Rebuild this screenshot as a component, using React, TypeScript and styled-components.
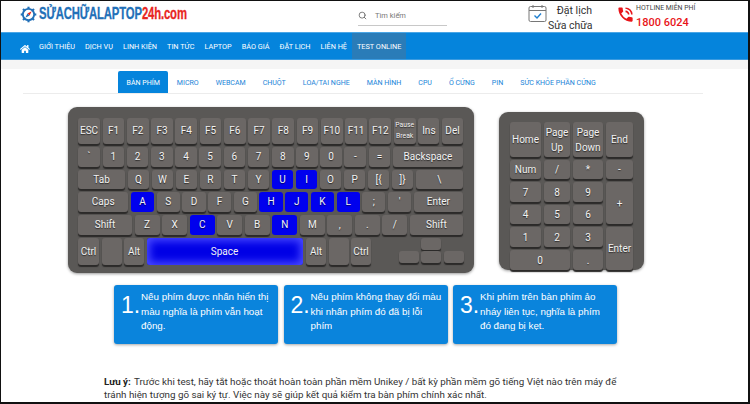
import React from "react";
import styled, { createGlobalStyle } from "styled-components";
import { FaHome } from "react-icons/fa";
import { MdPhoneInTalk } from "react-icons/md";
import { Search } from "lucide-react";

const GlobalStyle = createGlobalStyle`
  html, body {
    margin: 0;
    padding: 0;
    background: #fff;
    font-family: Roboto, "Noto Sans", sans-serif;
  }
`;

const Frame = styled.div`
  width: 750px;
  height: 404px;
  box-sizing: border-box;
  border: 1px solid #111;
  border-right-width: 2px;
  border-bottom-width: 2px;
  overflow: hidden;
  background: #fff;
`;

const Header = styled.header`
  display: flex;
  align-items: center;
  height: 31px;
  padding-left: 19px;
`;

const Logo = styled.div`
  display: flex;
  align-items: center;
  width: 338px;
  margin-top: -5px;
`;

const LogoText = styled.div`
  margin-left: 2px;
  font-family: "Liberation Sans", Arial, sans-serif;
  font-weight: 700;
  font-size: 17px;
  color: #2270b8;
  letter-spacing: -0.2px;
  transform: scaleX(0.665);
  transform-origin: left center;
  white-space: nowrap;
  -webkit-text-stroke: 0.3px currentColor;

  span {
    color: #e8261f;
  }
`;

const SearchBox = styled.div`
  display: flex;
  align-items: center;
  gap: 8px;
  width: 89px;
  height: 19px;
  margin-top: -1px;
  border-bottom: 1px solid #c8c8c8;
  font-size: 7.5px;
  color: #777;
  svg {
    color: #555;
  }
`;

const Booking = styled.div`
  display: flex;
  align-items: flex-start;
  align-self: flex-start;
  margin-left: 81px;
  padding-top: 3px;
  width: 88px;
`;

const BookingText = styled.div`
  width: 44px;
  margin-top: -1px;
  text-align: right;
  font-size: 10.5px;
  line-height: 15px;
  color: #333;
  white-space: nowrap;
`;

const Hotline = styled.div`
  display: flex;
  align-items: flex-start;
  align-self: flex-start;
  gap: 1px;
  padding-top: 2px;

  svg {
    margin-top: 2px;
  }
`;

const HotlineLabel = styled.div`
  font-size: 6.9px;
  line-height: 10px;
  color: #444;
  white-space: nowrap;
`;

const HotlineNumber = styled.div`
  margin-top: 2px;
  font-size: 11px;
  line-height: 16px;
  font-weight: 500;
  color: #e8141a;
  white-space: nowrap;
`;

const Nav = styled.nav`
  display: flex;
  align-items: stretch;
  height: 28px;
  box-sizing: border-box;
  padding-left: 19px;
  background: #0584dc;
  border-top: 1px solid #4aa6e6;
  border-bottom: 1px solid #3b9be0;
`;

const NavHome = styled.div`
  display: flex;
  align-items: center;
  width: 14px;
  padding-top: 5px;
  color: #fff;
`;

const NavLink = styled.a<{ $active?: boolean }>`
  display: flex;
  align-items: center;
  padding: 0 5px;
  font-size: 7.3px;
  color: #fff;
  white-space: nowrap;
  background: ${(p) => (p.$active ? "#2a7cb8" : "transparent")};
`;

const Strip = styled.div`
  height: 9px;
  background: #f5f5f5;
`;

const Tabs = styled.div`
  display: flex;
  align-items: stretch;
  height: 22px;
  margin: 2px 45px 0 22px;
  padding-left: 95px;
  border-bottom: 1px solid #ececec;
`;

const Tab = styled.a<{ $active?: boolean }>`
  display: flex;
  align-items: center;
  padding: 0 8.5px;
  font-size: 7.05px;
  white-space: nowrap;
  color: ${(p) => (p.$active ? "#fff" : "#1a84d8")};
  background: ${(p) => (p.$active ? "#0584dc" : "transparent")};
  border-radius: 2px 2px 0 0;
`;

const Boards = styled.div`
  display: flex;
  align-items: flex-start;
  padding: 13px 0 0 67px;
`;

const Board = styled.div`
  display: flex;
  flex-direction: column;
  gap: 3px;
  width: 406px;
  height: 166px;
  box-sizing: border-box;
  padding: 11px 11px 0 10px;
  background: #5a5856;
  border-radius: 9px;
  box-shadow: 0 1px 3px rgba(0, 0, 0, 0.4);
`;

const Row = styled.div<{ $h: number }>`
  display: flex;
  gap: 2.5px;
  height: ${(p) => p.$h}px;
`;

const Key = styled.div<{ $w?: number; $fixed?: number; $on?: boolean; $small?: boolean }>`
  flex: ${(p) => (p.$fixed ? `none` : `${p.$w ?? 22} 1 0`)};
  width: ${(p) => (p.$fixed ? `${p.$fixed}px` : "auto")};
  min-width: 0;
  display: flex;
  align-items: center;
  justify-content: center;
  text-align: center;
  font-size: ${(p) => (p.$small ? "6.8px" : "10px")};
  line-height: ${(p) => (p.$small ? "11px" : "14px")};
  color: #f2f2f2;
  text-shadow: 0 1px 1px rgba(0, 0, 0, 0.6);
  white-space: nowrap;
  background: ${(p) => (p.$on ? "#0000ee" : "#6b6765")};
  border-radius: 3px;
  box-shadow: ${(p) => (p.$on ? "none" : "0 2px 1px #2b2a29")};
`;

const SpaceKey = styled(Key)`
  margin-right: 1px;
  background: #0000e6;
  box-shadow: inset 0 0 9px 3px #4a4aff;
  text-shadow: none;
`;

const Arrows = styled.div`
  display: grid;
  grid-template-columns: repeat(3, 20px);
  grid-template-rows: 12px 12px;
  gap: 1px 2.5px;
  margin-left: 25px;
  flex: none;
  align-self: flex-start;
`;

const ArrowKey = styled.div<{ $col: number; $row: number }>`
  grid-column: ${(p) => p.$col};
  grid-row: ${(p) => p.$row};
  background: #6b6765;
  border-radius: 3px;
  box-shadow: 0 2px 1px #2b2a29;
`;

const Numpad = styled.div`
  display: grid;
  grid-template-columns: 31px 26px 30px 27px;
  grid-template-rows: 35px 19px 20px 19px 20px 20px;
  gap: 3px;
  width: 145px;
  height: 158px;
  margin: 5px 0 0 25px;
  box-sizing: border-box;
  padding: 10px 0 0 11px;
  background: #5a5856;
  border-radius: 9px;
  box-shadow: 0 1px 3px rgba(0, 0, 0, 0.4);
`;

const PadKey = styled.div<{ $span?: string; $row?: string }>`
  grid-column: ${(p) => p.$span ?? "auto"};
  grid-row: ${(p) => p.$row ?? "auto"};
  display: flex;
  align-items: center;
  justify-content: center;
  text-align: center;
  font-size: 10px;
  line-height: 15px;
  color: #f2f2f2;
  text-shadow: 0 1px 1px rgba(0, 0, 0, 0.6);
  background: #6b6765;
  border-radius: 3px;
  box-shadow: 0 2px 1px #2b2a29;
`;

const Cards = styled.div`
  display: flex;
  gap: 5.5px;
  margin: 12px 0 0 113px;
`;

const Card = styled.div`
  display: flex;
  width: 164px;
  height: 59px;
  box-sizing: border-box;
  padding: 5px 0 0 7px;
  background: #0a84dc;
  border-radius: 3px;
  box-shadow: 0 1px 3px rgba(0, 0, 0, 0.35);
  color: #fff;
  font-family: "Liberation Sans", Arial, sans-serif;
`;

const CardNumber = styled.div`
  flex: none;
  width: 20px;
  margin-top: 1px;
  font-size: 23px;
  line-height: 28px;
`;

const CardText = styled.div`
  width: 132px;
  font-size: 9.8px;
  line-height: 14.7px;
`;

const Note = styled.p`
  margin: 31px 0 0 103px;
  width: 520px;
  font-size: 9.8px;
  line-height: 13px;
  color: #333;

  b {
    margin-right: 1px;
    font-weight: 700;
    color: #222;
  }
`;

const navItems = ["GIỚI THIỆU", "DỊCH VỤ", "LINH KIỆN", "TIN TỨC", "LAPTOP", "BÁO GIÁ", "ĐẶT LỊCH", "LIÊN HỆ"];
const tabItems = ["MICRO", "WEBCAM", "CHUỘT", "LOA/TAI NGHE", "MÀN HÌNH", "CPU", "Ổ CỨNG", "PIN", "SỨC KHỎE PHẦN CỨNG"];

type K = [string, number?, boolean?];

const keyRows: { h: number; keys: K[] }[] = [
  {
    h: 26,
    keys: [["ESC"], ...["F1", "F2", "F3", "F4", "F5", "F6", "F7", "F8", "F9", "F10", "F11", "F12"].map((l): K => [l, 21.6]), ["Pause|Break", 22], ["Ins", 21], ["Del", 21]],
  },
  {
    h: 20,
    keys: [["`", 22], ...["1", "2", "3", "4", "5", "6", "7", "8", "9", "0", "-", "="].map((l): K => [l, 21.6]), ["Backspace", 70]],
  },
  {
    h: 19,
    keys: [["Tab", 46], ["Q", 21], ["W", 21], ["E", 21], ["R", 21], ["T", 21], ["Y", 21], ["U", 21, true], ["I", 21, true], ["O", 21], ["P", 21], ["[{", 21], ["]}", 21], ["\\", 46]],
  },
  {
    h: 20,
    keys: [["Caps", 50], ["A", 23, true], ["S", 23], ["D", 23], ["F", 23], ["G", 23], ["H", 23, true], ["J", 23, true], ["K", 23, true], ["L", 23, true], [";", 23], ["'", 23], ["Enter", 49]],
  },
  {
    h: 20,
    keys: [["Shift", 54], ["Z", 25], ["X", 25], ["C", 25, true], ["V", 25], ["B", 25], ["N", 25, true], ["M", 25], [",", 25], [".", 25], ["/", 25], ["Shift", 53]],
  },
];

const padKeys: { label: React.ReactNode; span?: string; row?: string }[] = [
  { label: "Home" },
  { label: <>Page<br />Up</> },
  { label: <>Page<br />Down</> },
  { label: "End" },
  { label: "Num" },
  { label: "/" },
  { label: "*" },
  { label: "-" },
  { label: "7" },
  { label: "8" },
  { label: "9" },
  { label: "+", row: "3 / span 2", span: "4" },
  { label: "4" },
  { label: "5" },
  { label: "6" },
  { label: "1" },
  { label: "2" },
  { label: "3" },
  { label: "Enter", row: "5 / span 2", span: "4" },
  { label: "0", span: "1 / span 2" },
  { label: "." },
];

const LogoGear = () => (
  <svg width="17" height="17" viewBox="0 0 24 24">
    <g stroke="#2270b8" strokeWidth="3" strokeLinecap="butt">
      {[0, 45, 90, 135, 180, 225, 270, 315].map((a) => (
        <line key={a} x1="12" y1="1" x2="12" y2="5" transform={`rotate(${a} 12 12)`} />
      ))}
    </g>
    <circle cx="12" cy="12" r="8" fill="#fff" stroke="#2270b8" strokeWidth="2.6" />
    <path d="M16.5 7.5 L13.5 13.5 L10.5 10.5 Z" fill="#e8261f" />
    <path d="M7.5 16.5 L10.5 10.5 L13.5 13.5 Z" fill="#2270b8" />
  </svg>
);

const CalendarIcon = () => (
  <svg width="20" height="19" viewBox="0 0 20 19" fill="none">
    <rect x="1" y="2.5" width="17" height="15" rx="1.5" stroke="#777" strokeWidth="1" />
    <path d="M1 6.5H18" stroke="#777" strokeWidth="1" />
    <path d="M5 1V4M14 1V4" stroke="#777" strokeWidth="1" />
    <path d="M6.5 11.5L9 14L13 9.5" stroke="#1f7fd0" strokeWidth="1.4" />
  </svg>
);

const App = () => (
  <Frame>
    <GlobalStyle />
    <Header>
      <Logo>
        <LogoGear />
        <LogoText>
          SỬACHỮALAPTOP<span>24h.com</span>
        </LogoText>
      </Logo>
      <SearchBox>
        <Search size={9} />
        Tìm kiếm
      </SearchBox>
      <Booking>
        <CalendarIcon />
        <BookingText>
          Đặt lịch
          <br />
          Sửa chữa
        </BookingText>
      </Booking>
      <Hotline>
        <MdPhoneInTalk size={19} color="#e8141a" />
        <div>
          <HotlineLabel>HOTLINE MIỄN PHÍ</HotlineLabel>
          <HotlineNumber>1800 6024</HotlineNumber>
        </div>
      </Hotline>
    </Header>
    <Nav>
      <NavHome>
        <FaHome size={10} />
      </NavHome>
      {navItems.map((item) => (
        <NavLink key={item}>{item}</NavLink>
      ))}
      <NavLink $active>TEST ONLINE</NavLink>
    </Nav>
    <Strip />
    <Tabs>
      <Tab $active>BÀN PHÍM</Tab>
      {tabItems.map((item) => (
        <Tab key={item}>{item}</Tab>
      ))}
    </Tabs>
    <Boards>
      <Board>
        {keyRows.map((row, i) => (
          <Row key={i} $h={row.h}>
            {row.keys.map(([label, w, on], j) =>
              label.includes("|") ? (
                <Key key={j} $w={w} $small>
                  <div>
                    {label.split("|")[0]}
                    <br />
                    {label.split("|")[1]}
                  </div>
                </Key>
              ) : (
                <Key key={j} $w={w} $on={on}>
                  {label}
                </Key>
              )
            )}
          </Row>
        ))}
        <Row $h={27}>
          <Key $fixed={21}>Ctrl</Key>
          <Key $fixed={20} />
          <Key $fixed={20}>Alt</Key>
          <SpaceKey $fixed={156} $on>Space</SpaceKey>
          <Key $fixed={20}>Alt</Key>
          <Key $fixed={20} />
          <Key $fixed={20}>Ctrl</Key>
          <Arrows>
            <ArrowKey $col={2} $row={1} />
            <ArrowKey $col={1} $row={2} />
            <ArrowKey $col={2} $row={2} />
            <ArrowKey $col={3} $row={2} />
          </Arrows>
        </Row>
      </Board>
      <Numpad>
        {padKeys.map((k, i) => (
          <PadKey key={i} $span={k.span} $row={k.row}>
            {k.label}
          </PadKey>
        ))}
      </Numpad>
    </Boards>
    <Cards>
      <Card>
        <CardNumber>1.</CardNumber>
        <CardText>Nếu phím được nhấn hiển thị màu nghĩa là phím vẫn hoạt động.</CardText>
      </Card>
      <Card>
        <CardNumber>2.</CardNumber>
        <CardText>Nếu phím không thay đổi màu khi nhấn phím đó đã bị lỗi phím</CardText>
      </Card>
      <Card>
        <CardNumber>3.</CardNumber>
        <CardText>Khi phím trên bàn phím ảo nháy liên tục, nghĩa là phím đó đang bị kẹt.</CardText>
      </Card>
    </Cards>
    <Note>
      <b>Lưu ý:</b> Trước khi test, hãy tắt hoặc thoát hoàn toàn phần mềm Unikey / bất kỳ phần mềm gõ tiếng Việt nào trên máy để tránh hiện tượng gõ sai ký tự. Việc này sẽ giúp kết quả kiểm tra bàn phím chính xác nhất.
    </Note>
  </Frame>
);

export default App;
